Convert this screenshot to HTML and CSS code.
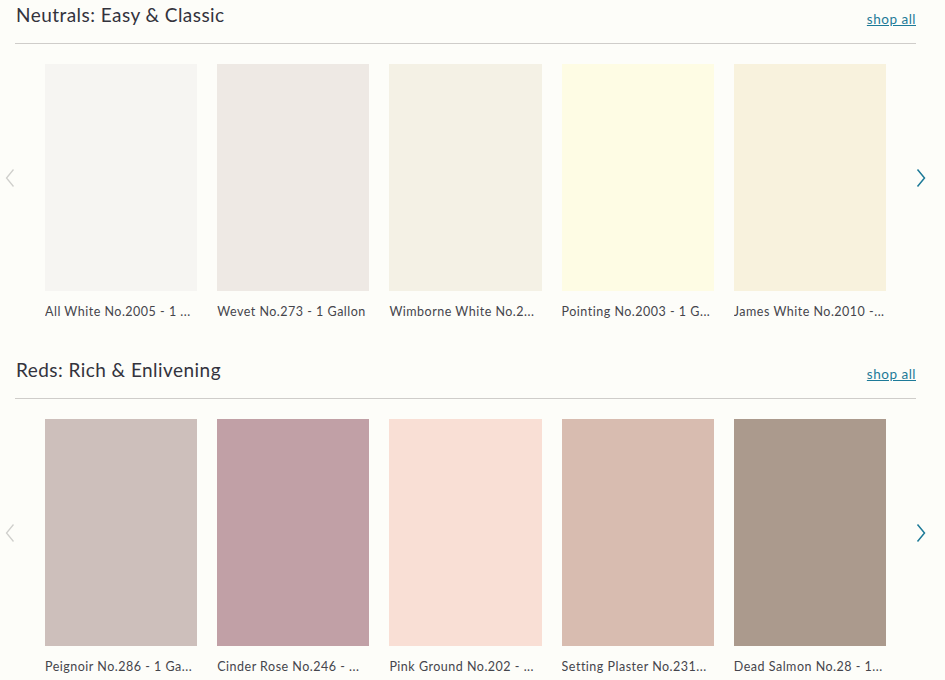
FILE: index.html
```html
<!DOCTYPE html>
<html lang="en">
<head>
<meta charset="utf-8">
<title>Paint colours</title>
<link rel="stylesheet" href="styles.css">
</head>
<body>
<section class="collection">
  <header class="collection-head">
    <h2 class="collection-title">Neutrals: Easy &amp; Classic</h2>
    <a class="shop-all" href="#">shop all</a>
  </header>
  <div class="carousel">
    <button class="arrow arrow-prev" aria-label="Previous">
      <svg viewBox="0 0 10 20" width="10" height="20"><path d="M8.5 1.5 L1.5 10 L8.5 18.5" fill="none" stroke="currentColor" stroke-width="1.3"/></svg>
    </button>
    <ul class="track">
      <li class="item"><div class="swatch" style="background:#f6f5f2"></div><p class="name">All White No.2005 - 1 ...</p></li>
      <li class="item"><div class="swatch" style="background:#eee9e4"></div><p class="name">Wevet No.273 - 1 Gallon</p></li>
      <li class="item"><div class="swatch" style="background:#f4f1e5"></div><p class="name">Wimborne White No.2...</p></li>
      <li class="item"><div class="swatch" style="background:#fefce4"></div><p class="name">Pointing No.2003 - 1 G...</p></li>
      <li class="item"><div class="swatch" style="background:#f8f2dd"></div><p class="name">James White No.2010 -...</p></li>
    </ul>
    <button class="arrow arrow-next" aria-label="Next">
      <svg viewBox="0 0 10 20" width="10" height="20"><path d="M1.5 1.5 L8.5 10 L1.5 18.5" fill="none" stroke="currentColor" stroke-width="1.5"/></svg>
    </button>
  </div>
</section>
<section class="collection">
  <header class="collection-head">
    <h2 class="collection-title">Reds: Rich &amp; Enlivening</h2>
    <a class="shop-all" href="#">shop all</a>
  </header>
  <div class="carousel">
    <button class="arrow arrow-prev" aria-label="Previous">
      <svg viewBox="0 0 10 20" width="10" height="20"><path d="M8.5 1.5 L1.5 10 L8.5 18.5" fill="none" stroke="currentColor" stroke-width="1.3"/></svg>
    </button>
    <ul class="track">
      <li class="item"><div class="swatch" style="background:#cdbfbb"></div><p class="name">Peignoir No.286 - 1 Ga...</p></li>
      <li class="item"><div class="swatch" style="background:#c1a0a6"></div><p class="name">Cinder Rose No.246 - ...</p></li>
      <li class="item"><div class="swatch" style="background:#f9dfd5"></div><p class="name">Pink Ground No.202 - ...</p></li>
      <li class="item"><div class="swatch" style="background:#d8bcb0"></div><p class="name">Setting Plaster No.231...</p></li>
      <li class="item"><div class="swatch" style="background:#ab9a8d"></div><p class="name">Dead Salmon No.28 - 1...</p></li>
    </ul>
    <button class="arrow arrow-next" aria-label="Next">
      <svg viewBox="0 0 10 20" width="10" height="20"><path d="M1.5 1.5 L8.5 10 L1.5 18.5" fill="none" stroke="currentColor" stroke-width="1.5"/></svg>
    </button>
  </div>
</section>
</body>
</html>
```
FILE: styles.css
```css
html, body {
  margin: 0;
  padding: 0;
  background: #fdfdf9;
}
body {
  font-family: Lato, "Noto Sans", sans-serif;
  color: #3a3a44;
  width: 945px;
  height: 680px;
  overflow: hidden;
}
.collection {
  padding: 0 29px 0 15px;
  height: 355px;
}
.collection-head {
  display: flex;
  justify-content: space-between;
  align-items: baseline;
  height: 44px;
  box-sizing: border-box;
  padding-top: 3px;
  border-bottom: 1px solid #cfcdca;
}
.collection-title {
  margin: 0 0 0 1px;
  font-size: 19px;
  line-height: 24px;
  font-weight: 400;
  color: #33333d;
  letter-spacing: 0.45px;
}
.shop-all {
  font-size: 13.5px;
  color: #1d7a98;
  text-decoration: underline;
  letter-spacing: 0.5px;
  position: relative;
  top: 2px;
}
.carousel {
  position: relative;
  margin-top: 20px;
  padding: 0 30px;
}
.track {
  list-style: none;
  margin: 0;
  padding: 0;
  display: flex;
  gap: 20px;
}
.item {
  flex: 1 1 0;
  min-width: 0;
}
.swatch {
  height: 227px;
}
.name {
  margin: 13px 0 0;
  font-size: 12.5px;
  line-height: 16px;
  color: #45454c;
  letter-spacing: 0.5px;
  white-space: nowrap;
  overflow: hidden;
}
.arrow {
  position: absolute;
  top: 104px;
  width: 20px;
  height: 20px;
  padding: 0;
  border: 0;
  background: none;
  display: flex;
  align-items: center;
  justify-content: center;
}
.arrow-prev {
  left: -15px;
  color: #cfcfcc;
}
.arrow-next {
  right: -15px;
  color: #1d7a98;
}
```
